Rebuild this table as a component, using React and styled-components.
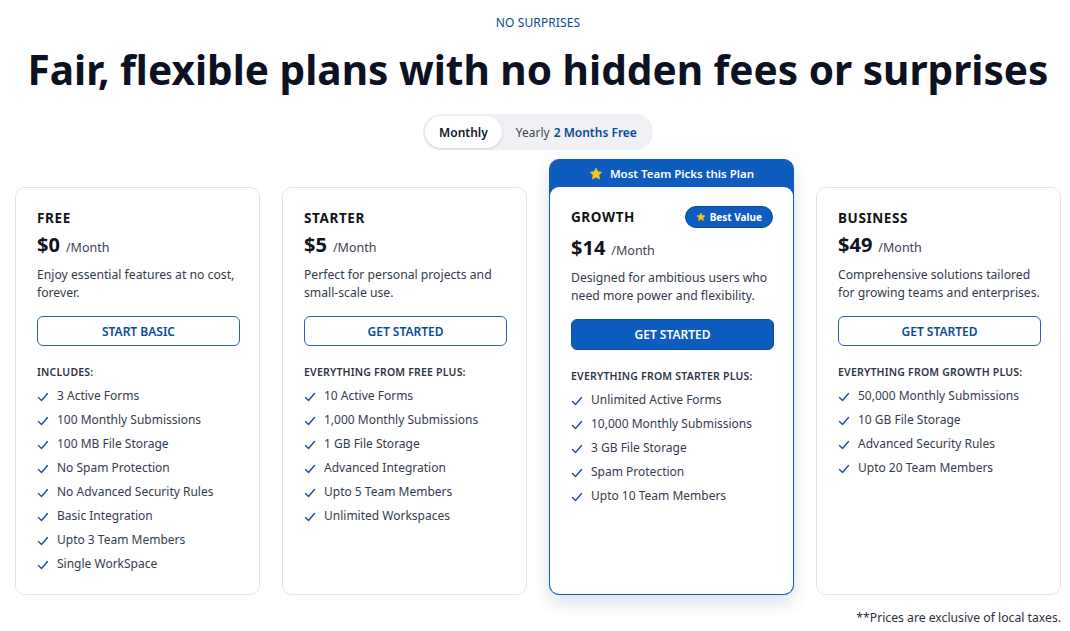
import React from "react";
import styled, { createGlobalStyle } from "styled-components";

const GlobalStyle = createGlobalStyle`
  * { box-sizing: border-box; }
  body {
    margin: 0;
    background: #ffffff;
    font-family: "Noto Sans", "Open Sans", sans-serif;
    color: #1b2132;
  }
`;

const Page = styled.div`
  width: 1070px;
  padding: 16px 9px 0 15px;
  display: flex;
  flex-direction: column;
  align-items: center;
`;

const Eyebrow = styled.div`
  font-size: 12px;
  line-height: 14px;
  color: #0b4a9a;
  letter-spacing: 0.1px;
`;

const Title = styled.h1`
  margin: 16px 0 0;
  font-size: 40.6px;
  line-height: 48px;
  font-weight: 700;
  color: #0d1222;
  white-space: nowrap;
`;

const Toggle = styled.div`
  margin-top: 20px;
  display: flex;
  align-items: center;
  gap: 14px;
  padding: 2px 16px 2px 2px;
  background: #f0f1f4;
  border-radius: 18px;
`;

const ToggleOption = styled.div`
  height: 32px;
  display: flex;
  align-items: center;
  padding: ${({ $active }) => ($active ? "0 14px" : "0")};
  background: ${({ $active }) => ($active ? "#ffffff" : "transparent")};
  border-radius: 16px;
  box-shadow: ${({ $active }) => ($active ? "0 1px 3px rgba(0,0,0,0.12)" : "none")};
  font-size: 12px;
  font-weight: ${({ $active }) => ($active ? 600 : 400)};
  color: ${({ $active }) => ($active ? "#111827" : "#3f4556")};
`;

const Free = styled.span`
  margin-left: 4px;
  font-weight: 600;
  color: #0b4a9a;
`;

const Grid = styled.div`
  align-self: stretch;
  margin-top: 9px;
  display: grid;
  grid-template-columns: repeat(4, 245px);
  gap: 22px;
  align-items: end;
`;

const Card = styled.div`
  height: ${({ $featured }) => ($featured ? "436px" : "408px")};
  display: flex;
  flex-direction: column;
  border: ${({ $featured }) => ($featured ? "1.5px solid #0f5cbf" : "1px solid #e2e4e8")};
  border-radius: 10px;
  background: ${({ $featured }) => ($featured ? "#0f5cbf" : "#ffffff")};
  box-shadow: ${({ $featured }) =>
    $featured ? "0 8px 18px rgba(15, 40, 90, 0.14)" : "none"};
  overflow: hidden;
`;

const Banner = styled.div`
  height: 27px;
  display: flex;
  align-items: center;
  justify-content: center;
  gap: 7px;
  color: #ffffff;
  font-size: 11.5px;
  font-weight: 600;
`;

const Body = styled.div`
  flex: 1;
  background: #ffffff;
  border-radius: ${({ $featured }) => ($featured ? "9px 9px 8px 8px" : "0")};
  padding: 19px 18px 0 21px;
  display: flex;
  flex-direction: column;
`;

const NameRow = styled.div`
  height: 22px;
  padding-right: 2px;
  display: flex;
  align-items: center;
  justify-content: space-between;
`;

const Name = styled.div`
  font-size: 13.5px;
  font-weight: 700;
  letter-spacing: 0.6px;
  color: #111318;
`;

const Badge = styled.div`
  display: flex;
  align-items: center;
  gap: 4px;
  height: 22px;
  padding: 0 10px;
  border-radius: 11px;
  background: #0f5cbf;
  border: 1px solid #0a4b9f;
  color: #ffffff;
  font-size: 10px;
  font-weight: 700;
`;

const PriceRow = styled.div`
  margin-top: ${({ $featured }) => ($featured ? "8px" : "4px")};
  display: flex;
  align-items: baseline;
  gap: 6px;
`;

const Amount = styled.span`
  font-size: 20px;
  line-height: 24px;
  font-weight: 700;
  color: #0f1320;
`;

const Per = styled.span`
  font-size: 12.5px;
  color: #3d4354;
`;

const Desc = styled.p`
  margin: 9px 0 0;
  font-size: 12.2px;
  line-height: 18px;
  color: #333a4b;
  min-height: 36px;
`;

const Button = styled.button`
  margin-top: 14px;
  width: 203px;
  height: ${({ $solid }) => ($solid ? "31px" : "30px")};
  border-radius: 6px;
  border: 1.5px solid ${({ $solid }) => ($solid ? "#0a4fa8" : "#2a62ad")};
  background: ${({ $solid }) => ($solid ? "#0f5cbf" : "#ffffff")};
  color: ${({ $solid }) => ($solid ? "#ffffff" : "#0b4a9a")};
  font-family: inherit;
  font-size: 12px;
  font-weight: 600;
  cursor: pointer;
`;

const ListLabel = styled.div`
  margin-top: 18px;
  font-size: 10.5px;
  line-height: 16px;
  font-weight: 600;
  letter-spacing: 0.2px;
  color: #2f3546;
`;

const List = styled.ul`
  list-style: none;
  margin: 3px 0 0;
  padding: 0;
`;

const Item = styled.li`
  height: 24px;
  display: flex;
  align-items: center;
  gap: 8px;
  font-size: 12px;
  color: #353c4e;
`;

const Note = styled.div`
  align-self: flex-end;
  margin-top: 14px;
  font-size: 12.2px;
  color: #2b3040;
`;

const Check = () => (
  <svg width="12" height="12" viewBox="0 0 12 12" fill="none" style={{ marginTop: 4 }}>
    <path d="M1.5 6.5 L4.5 9.5 L10.5 2.5" stroke="#1d4f95" strokeWidth="1.4" strokeLinecap="round" strokeLinejoin="round" />
  </svg>
);

const Star = ({ size }) => (
  <svg width={size} height={size} viewBox="0 0 24 24">
    <path
      d="M12 2.2l2.9 6.1 6.6.8-4.9 4.6 1.3 6.6L12 17l-5.9 3.3 1.3-6.6-4.9-4.6 6.6-.8z"
      fill="#f7c31b"
      stroke="#f7c31b"
      strokeWidth="1.6"
      strokeLinejoin="round"
    />
  </svg>
);

const plans = [
  {
    name: "FREE",
    price: "$0",
    desc: "Enjoy essential features at no cost, forever.",
    cta: "START BASIC",
    label: "INCLUDES:",
    items: [
      "3 Active Forms",
      "100 Monthly Submissions",
      "100 MB File Storage",
      "No Spam Protection",
      "No Advanced Security Rules",
      "Basic Integration",
      "Upto 3 Team Members",
      "Single WorkSpace",
    ],
  },
  {
    name: "STARTER",
    price: "$5",
    desc: "Perfect for personal projects and small-scale use.",
    cta: "GET STARTED",
    label: "EVERYTHING FROM FREE PLUS:",
    items: [
      "10 Active Forms",
      "1,000 Monthly Submissions",
      "1 GB File Storage",
      "Advanced Integration",
      "Upto 5 Team Members",
      "Unlimited Workspaces",
    ],
  },
  {
    name: "GROWTH",
    price: "$14",
    featured: true,
    desc: "Designed for ambitious users who need more power and flexibility.",
    cta: "GET STARTED",
    label: "EVERYTHING FROM STARTER PLUS:",
    items: [
      "Unlimited Active Forms",
      "10,000 Monthly Submissions",
      "3 GB File Storage",
      "Spam Protection",
      "Upto 10 Team Members",
    ],
  },
  {
    name: "BUSINESS",
    price: "$49",
    desc: "Comprehensive solutions tailored for growing teams and enterprises.",
    cta: "GET STARTED",
    label: "EVERYTHING FROM GROWTH PLUS:",
    items: [
      "50,000 Monthly Submissions",
      "10 GB File Storage",
      "Advanced Security Rules",
      "Upto 20 Team Members",
    ],
  },
];

export default function App() {
  return (
    <>
      <GlobalStyle />
      <Page>
        <Eyebrow>NO SURPRISES</Eyebrow>
        <Title>Fair, flexible plans with no hidden fees or surprises</Title>
        <Toggle>
          <ToggleOption $active>Monthly</ToggleOption>
          <ToggleOption>
            Yearly <Free>2 Months Free</Free>
          </ToggleOption>
        </Toggle>
        <Grid>
          {plans.map((p) => (
            <Card key={p.name} $featured={p.featured}>
              {p.featured && (
                <Banner>
                  <Star size={14} />
                  Most Team Picks this Plan
                </Banner>
              )}
              <Body $featured={p.featured}>
                <NameRow>
                  <Name>{p.name}</Name>
                  {p.featured && (
                    <Badge>
                      <Star size={10} />
                      Best Value
                    </Badge>
                  )}
                </NameRow>
                <PriceRow $featured={p.featured}>
                  <Amount>{p.price}</Amount>
                  <Per>/Month</Per>
                </PriceRow>
                <Desc>{p.desc}</Desc>
                <Button $solid={p.featured}>{p.cta}</Button>
                <ListLabel>{p.label}</ListLabel>
                <List>
                  {p.items.map((it) => (
                    <Item key={it}>
                      <Check />
                      {it}
                    </Item>
                  ))}
                </List>
              </Body>
            </Card>
          ))}
        </Grid>
        <Note>**Prices are exclusive of local taxes.</Note>
      </Page>
    </>
  );
}
